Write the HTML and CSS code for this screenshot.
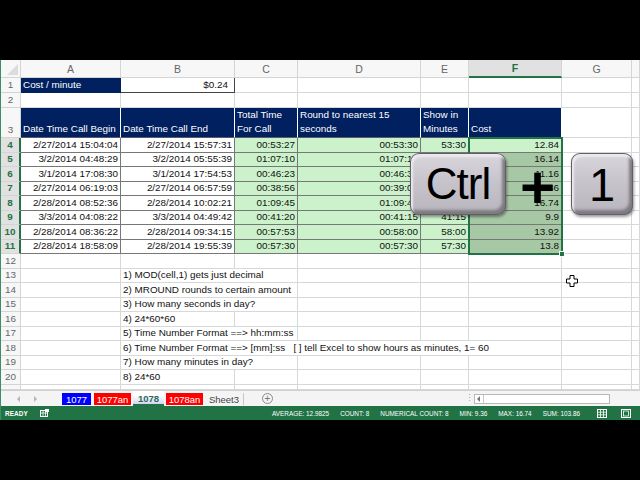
FILE: index.html
```html
<!DOCTYPE html>
<html>
<head>
<meta charset="utf-8">
<title>Excel – Ctrl + 1</title>
<link rel="stylesheet" href="styles.css">
</head>
<body>
<div class="screen">
  <div class="band"></div>
  <div class="excel">
    <div class="sheet">
      <div class="ch corner"><span class="tri"></span></div>
      <div class="ch">A</div><div class="ch">B</div><div class="ch">C</div><div class="ch">D</div><div class="ch">E</div><div class="ch sel">F</div><div class="ch">G</div><div class="ch"></div>

      <div class="rh">1</div><div class="c nv">Cost / minute</div><div class="c r box">$0.24</div><div class="c"></div><div class="c"></div><div class="c"></div><div class="c"></div><div class="c"></div><div class="c"></div>

      <div class="rh">2</div><div class="c"></div><div class="c"></div><div class="c"></div><div class="c"></div><div class="c"></div><div class="c"></div><div class="c"></div><div class="c"></div>

      <div class="rh">3</div><div class="c nv hd">Date Time Call Begin</div><div class="c nv hd">Date Time Call End</div><div class="c nv hd"><span>Total Time<br>For Call</span></div><div class="c nv hd"><span>Round to nearest 15<br>seconds</span></div><div class="c nv hd"><span>Show in<br>Minutes</span></div><div class="c nv hd">Cost</div><div class="c"></div><div class="c"></div>

      <div class="rh sel">4</div><div class="c d r">2/27/2014 15:04:04</div><div class="c d r">2/27/2014 15:57:31</div><div class="c d g r">00:53:27</div><div class="c d g r">00:53:30</div><div class="c d g r">53:30</div><div class="c d g r">12.84</div><div class="c"></div><div class="c"></div>
      <div class="rh sel">5</div><div class="c d r">3/2/2014 04:48:29</div><div class="c d r">3/2/2014 05:55:39</div><div class="c d g r">01:07:10</div><div class="c d g r">01:07:15</div><div class="c d g r">67:15</div><div class="c d gs r">16.14</div><div class="c"></div><div class="c"></div>
      <div class="rh sel">6</div><div class="c d r">3/1/2014 17:08:30</div><div class="c d r">3/1/2014 17:54:53</div><div class="c d g r">00:46:23</div><div class="c d g r">00:46:30</div><div class="c d g r">46:30</div><div class="c d gs r">11.16</div><div class="c"></div><div class="c"></div>
      <div class="rh sel">7</div><div class="c d r">2/27/2014 06:19:03</div><div class="c d r">2/27/2014 06:57:59</div><div class="c d g r">00:38:56</div><div class="c d g r">00:39:00</div><div class="c d g r">39:00</div><div class="c d gs r">9.36</div><div class="c"></div><div class="c"></div>
      <div class="rh sel">8</div><div class="c d r">2/28/2014 08:52:36</div><div class="c d r">2/28/2014 10:02:21</div><div class="c d g r">01:09:45</div><div class="c d g r">01:09:45</div><div class="c d g r">69:45</div><div class="c d gs r">16.74</div><div class="c"></div><div class="c"></div>
      <div class="rh sel">9</div><div class="c d r">3/3/2014 04:08:22</div><div class="c d r">3/3/2014 04:49:42</div><div class="c d g r">00:41:20</div><div class="c d g r">00:41:15</div><div class="c d g r">41:15</div><div class="c d gs r">9.9</div><div class="c"></div><div class="c"></div>
      <div class="rh sel">10</div><div class="c d r">2/28/2014 08:36:22</div><div class="c d r">2/28/2014 09:34:15</div><div class="c d g r">00:57:53</div><div class="c d g r">00:58:00</div><div class="c d g r">58:00</div><div class="c d gs r">13.92</div><div class="c"></div><div class="c"></div>
      <div class="rh sel">11</div><div class="c d r">2/28/2014 18:58:09</div><div class="c d r">2/28/2014 19:55:39</div><div class="c d g r">00:57:30</div><div class="c d g r">00:57:30</div><div class="c d g r">57:30</div><div class="c d gs r">13.8</div><div class="c"></div><div class="c"></div>

      <div class="rh">12</div><div class="c"></div><div class="c"></div><div class="c"></div><div class="c"></div><div class="c"></div><div class="c"></div><div class="c"></div><div class="c"></div>

      <div class="rh">13</div><div class="c"></div><div class="c span2">1) MOD(cell,1) gets just decimal</div><div class="c"></div><div class="c"></div><div class="c"></div><div class="c"></div><div class="c"></div>
      <div class="rh">14</div><div class="c"></div><div class="c span2">2) MROUND rounds to certain amount</div><div class="c"></div><div class="c"></div><div class="c"></div><div class="c"></div><div class="c"></div>
      <div class="rh">15</div><div class="c"></div><div class="c span2">3) How many seconds in day?</div><div class="c"></div><div class="c"></div><div class="c"></div><div class="c"></div><div class="c"></div>
      <div class="rh">16</div><div class="c"></div><div class="c">4) 24*60*60</div><div class="c"></div><div class="c"></div><div class="c"></div><div class="c"></div><div class="c"></div><div class="c"></div>
      <div class="rh">17</div><div class="c"></div><div class="c span2">5) Time Number Format ==&gt; hh:mm:ss</div><div class="c"></div><div class="c"></div><div class="c"></div><div class="c"></div><div class="c"></div>
      <div class="rh">18</div><div class="c"></div><div class="c span5 pre">6) Time Number Format ==&gt; [mm]:ss   [ ] tell Excel to show hours as minutes, 1= 60</div><div class="c"></div><div class="c"></div>
      <div class="rh">19</div><div class="c"></div><div class="c span2">7) How many minutes in day?</div><div class="c"></div><div class="c"></div><div class="c"></div><div class="c"></div><div class="c"></div>
      <div class="rh">20</div><div class="c"></div><div class="c">8) 24*60</div><div class="c"></div><div class="c"></div><div class="c"></div><div class="c"></div><div class="c"></div><div class="c"></div>
      <div class="rh">21</div><div class="c"></div><div class="c"></div><div class="c"></div><div class="c"></div><div class="c"></div><div class="c"></div><div class="c"></div><div class="c"></div>

      <div class="selbox"><span class="handle"></span></div>
    </div>

    <div class="tabbar">
      <div class="navs"><span class="arr l"></span><span class="arr rt"></span></div>
      <div class="tab blue">1077</div>
      <div class="tab red">1077an</div>
      <div class="tab active">1078</div>
      <div class="tab red">1078an</div>
      <div class="tab plain">Sheet3</div>
      <div class="addsheet">+</div>
      <div class="dots">⋮</div>
      <div class="hscroll"><span class="sarrow"></span></div>
    </div>

    <div class="status">
      <span class="ready">READY</span>
      <svg class="macro" width="9" height="8" viewBox="0 0 9 8"><rect x="0.5" y="1.5" width="7" height="6" fill="none" stroke="#fff"/><path d="M0.5 4h7M3 1.5v6M5.5 1.5v6" stroke="#fff" stroke-width="0.8"/><rect x="5" y="0" width="4" height="3" fill="#fff"/></svg>
      <div class="stats">
        <span>AVERAGE: 12.9825</span>
        <span>COUNT: 8</span>
        <span>NUMERICAL COUNT: 8</span>
        <span>MIN: 9.36</span>
        <span>MAX: 16.74</span>
        <span>SUM: 103.86</span>
      </div>
      <div class="views">
        <svg width="10" height="9" viewBox="0 0 10 9"><rect x="0.5" y="0.5" width="9" height="8" fill="none" stroke="#fff"/><path d="M0.5 3.2h9M0.5 5.8h9M3.5 0.5v8M6.5 0.5v8" stroke="#fff" stroke-width="0.8"/></svg>
        <svg width="10" height="9" viewBox="0 0 10 9"><rect x="0.5" y="0.5" width="9" height="8" fill="none" stroke="#fff"/><rect x="2.5" y="2" width="5" height="5" fill="none" stroke="#fff" stroke-width="0.8"/></svg>
      </div>
    </div>
  </div>

  <div class="key ctrl">Ctrl</div>
  <div class="plus">+</div>
  <div class="key one">1</div>
  <svg class="cursor" width="12" height="12" viewBox="0 0 12 12"><polygon points="4,0.5 8,0.5 8,4 11.5,4 11.5,8 8,8 8,11.5 4,11.5 4,8 0.5,8 0.5,4 4,4" fill="#fff" stroke="#000" stroke-width="1"/></svg>
</div>
</body>
</html>
```

FILE: styles.css
```css
* { box-sizing: border-box; }
html, body { margin: 0; padding: 0; }
body {
  background: #000;
  width: 640px;
  height: 480px;
  overflow: hidden;
  font-family: "Liberation Sans", Arial, sans-serif;
}
.screen {
  position: relative;
  width: 640px;
  height: 480px;
  display: flex;
  flex-direction: column;
}
.band { height: 60px; flex: none; background: #000; }
.excel {
  height: 360px;
  flex: none;
  display: flex;
  flex-direction: column;
  background: #fff;
  border-left: 1px solid #3f8c69;
}

/* ---------- grid ---------- */
.sheet {
  position: relative;
  display: grid;
  grid-template-columns: 20px 100px 114px 63px 123px 48px 93px 70px 1fr;
  grid-template-rows: 18px 15px 15px 30px repeat(17, 14.5px) 1fr;
  height: 330px;
  overflow: hidden;
  font-size: 9.9px;
  color: #111;
}
.c, .ch, .rh {
  border-right: 1px solid #d6d8d9;
  border-bottom: 1px solid #d6d8d9;
  display: flex;
  align-items: flex-end;
  white-space: nowrap;
  overflow: hidden;
  min-width: 0;
}
.c { padding: 0 2px 1px; line-height: 12px; background: #fff; }
.ch {
  background: #f7f7f7;
  color: #666;
  justify-content: center;
  align-items: center;
  font-size: 10.5px;
  border-color: #d4d4d4;
}
.ch.sel {
  background: #e1e1e1;
  color: #217346;
  font-weight: bold;
  border-bottom: 2px solid #217346;
}
.corner { justify-content: flex-end; align-items: flex-end; padding: 0 2px 2px 0; }
.tri {
  width: 0; height: 0;
  border-left: 11px solid transparent;
  border-bottom: 11px solid #dcdcdc;
}
.rh {
  background: #f7f7f7;
  color: #666;
  justify-content: center;
  line-height: 12px;
  padding-bottom: 1px;
  border-color: #d4d4d4;
}
.rh.sel {
  background: #e1e1e1;
  color: #217346;
  font-weight: bold;
  border-right: 2px solid #217346;
}
.nv { background: #002060; color: #fff; border-bottom-color: #002060; border-right-color: #002060; }
.hd { border-right-color: #fff; line-height: 14px; padding-bottom: 1px; border-bottom-color: #5a5a6a; }
.box { border-right-color: #444; border-bottom-color: #444; padding-right: 6px; }
.r { justify-content: flex-end; }
.d { border-right-color: #777; border-bottom-color: #777; }
.g { background: #ccf2cc; }
.gs { background: #a7c8a5; }
.span2 { grid-column: span 2; overflow: visible; }
.span5 { grid-column: span 5; overflow: visible; }
.pre { white-space: pre; }

.selbox {
  position: absolute;
  grid-column: 7 / 8;
  grid-row: 5 / 13;
  top: -1px; left: -1px; right: -1px; bottom: -1px;
  border: 2px solid #217346;
  pointer-events: none;
}
.handle {
  position: absolute;
  right: -4px; bottom: -4px;
  width: 6px; height: 6px;
  background: #217346;
  border: 1px solid #fff;
}

/* ---------- sheet tabs ---------- */
.tabbar {
  height: 16px;
  flex: none;
  display: flex;
  align-items: flex-start;
  background: #f4f4f4;
  border-top: 1px solid #d0d0d0;
  font-size: 9.5px;
}
.navs {
  width: 61px;
  height: 15px;
  display: flex;
  align-items: center;
  padding-left: 16px;
  gap: 14px;
}
.arr { width: 0; height: 0; border-top: 3px solid transparent; border-bottom: 3px solid transparent; }
.arr.l { border-right: 3px solid #b4b4b4; }
.arr.rt { border-left: 3px solid #b4b4b4; }
.tab {
  height: 12px;
  margin-top: 2px;
  display: flex;
  align-items: center;
  justify-content: center;
  color: #fff;
}
.tab.blue { width: 29px; background: #0000ff; margin-right: 3px; }
.tab.red { width: 37px; background: #ff0000; margin-right: 2px; }
.tab.active {
  width: 31px;
  margin-top: 0;
  height: 15px;
  margin-right: 2px;
  background: linear-gradient(180deg, #ffffff 35%, #d4d4f2 100%);
  color: #2a6b57;
  font-weight: bold;
  border-bottom: 2px solid #217346;
  padding-top: 1px;
}
.tab.plain { width: 39px; color: #444; border-right: 1px solid #c8c8c8; }
.addsheet {
  width: 11px; height: 11px;
  margin: 2px 0 0 18px;
  border: 1px solid #8a8a8a;
  border-radius: 50%;
  color: #777;
  font-size: 10px;
  line-height: 9px;
  text-align: center;
}
.dots { margin: 1px 0 0 192px; width: 6px; color: #a0a0a0; font-size: 9px; line-height: 13px; }
.hscroll {
  width: 136px;
  height: 10px;
  margin: 3px 0 0 3px;
  border: 1px solid #b8b8b8;
  background: #fff;
  display: flex;
}
.sarrow {
  width: 9px;
  border-right: 1px solid #c8c8c8;
  position: relative;
}
.sarrow::after {
  content: "";
  position: absolute;
  left: 2px; top: 1px;
  border-top: 3px solid transparent;
  border-bottom: 3px solid transparent;
  border-right: 3px solid #777;
}

/* ---------- status bar ---------- */
.status {
  height: 14px;
  flex: none;
  background: #217346;
  color: #fff;
  display: flex;
  align-items: center;
  font-size: 6.4px;
  padding-left: 4px;
}
.ready { font-weight: bold; letter-spacing: 0.1px; }
.macro { margin-left: 12px; }
.stats { margin-left: auto; display: flex; gap: 11px; }
.views { display: flex; gap: 14px; margin: 0 9px 0 17px; }

/* ---------- overlay keys ---------- */
.key {
  position: absolute;
  top: 153px;
  height: 62px;
  border-radius: 9px;
  background: linear-gradient(180deg, #d9d6dc 0%, #c6c2ca 50%, #b9b5bd 100%);
  box-shadow:
    inset 0 0 0 1px #625f66,
    inset 2px 3px 2px 1px #ebe9ee,
    inset -3px -4px 3px 1px #7d7a82,
    1px 2px 3px rgba(0, 0, 0, 0.4);
  display: flex;
  align-items: center;
  justify-content: center;
  color: #000;
  font-family: "Liberation Sans", Arial, sans-serif;
}
.ctrl { left: 410px; width: 96px; font-size: 44px; letter-spacing: -1px; }
.one { left: 571px; width: 62px; font-size: 47px; }
.plus {
  position: absolute;
  left: 510px;
  top: 150px;
  width: 55px;
  height: 75px;
  display: flex;
  align-items: center;
  justify-content: center;
  font-size: 60px;
  font-weight: bold;
  color: #000;
}
.cursor { position: absolute; left: 566px; top: 275px; }
```
